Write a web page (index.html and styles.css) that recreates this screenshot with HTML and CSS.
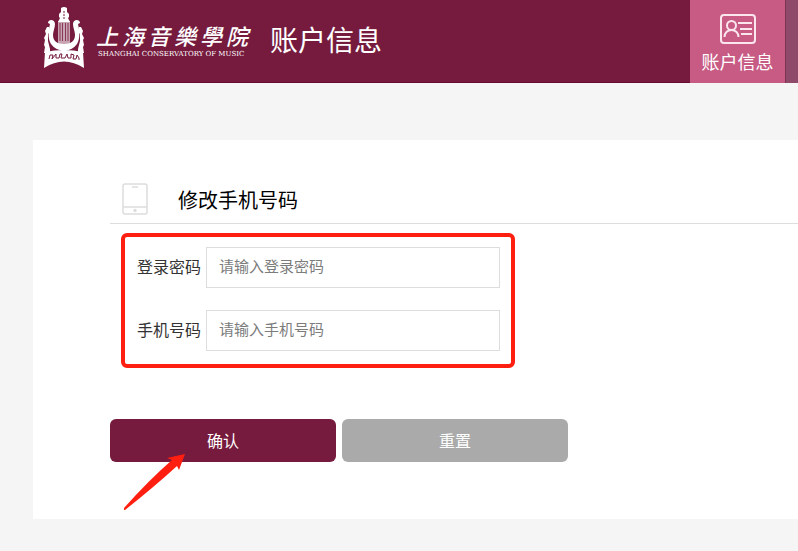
FILE: index.html
```html
<!DOCTYPE html>
<html lang="zh-CN">
<head>
  <meta charset="UTF-8" />
  <meta name="viewport" content="width=device-width, initial-scale=1.0" />
  <title>账户信息</title>
  <link rel="stylesheet" href="styles.css">
</head>
<body>
<header class="header">
  <div class="brand">
    <svg class="brand-mark" viewBox="0 0 40 62" aria-hidden="true">
      <!-- neck -->
      <path d="M17 1q3-2 6 0v4l2 2v3l-1 1 2 4H14l2-4-1-1V7l2-2z" fill="#fff" />
      <path d="M20 4v9" stroke="#761b3e" stroke-dasharray="2 1" fill="none" />
      <!-- lyre and strings -->
      <path d="M4 16c0-4 7-4 7 1 0 4-2 7-2 11 0 6 4 9 11 9s11-3 11-9c0-4-2-7-2-11 0-5 7-5 7-1l-2 1c2 8 2 15-1 20-3 4-7 6-12 7v2h-2v-2c-5-1-9-3-12-7-3-5-3-12-1-20z" fill="#fff" />
      <path d="M14 14h12v24H14z" fill="#fff" opacity=".6" />
      <path d="M16 16v18M18.500 16v18M21.500 16v18M24 16v18" stroke="#761b3e" stroke-width=".8" fill="none" />
      <!-- side frames -->
      <path d="M3 20h2v6l-1 1v7l1 4 1 4v4H0l1-6-1-2 1-5-1-2 2-4-1-3zM37 20h-2v6l1 1v7l-1 4-1 4v4h6l-1-6 1-2-1-5 1-2-2-4 1-3z" fill="#fff" />
      <!-- base -->
      <path d="M1 45q19-4 38 0l1 16q-20-13-40 0z" fill="#fff" />
      <path d="M5 52l1-4h3l-1 4 4-5v4h3l1-4h2l-1 4h4l2-4 1 4h3v-4l3 1-1 4h3l1-4 2 3v2" stroke="#761b3e" stroke-width="1" fill="none" />
    </svg>
    <div class="brand-text">
      <div class="brand-name">
        <span>上</span><span>海</span><span>音</span><span>樂</span><span>學</span><span>院</span>
      </div>
      <span class="brand-sub">SHANGHAI CONSERVATORY OF MUSIC</span>
    </div>
  </div>
  <h1 class="header-title">账户信息</h1>
  <nav class="nav">
    <a class="nav-item active" href="#">
      <svg class="nav-icon" viewBox="0 0 36 30" fill="none" stroke="#fbe6ee" stroke-width="2" aria-hidden="true">
        <rect x="1" y="1" width="34" height="28" rx="3" />
        <circle cx="11.500" cy="11.500" r="4.500" />
        <path d="M4.500 23c0-9.500 14-9.500 14 0M18 9h14M20 15h12M21 20h11" />
      </svg>
      <span>账户信息</span>
    </a>
    <div class="nav-more"></div>
  </nav>
</header>

<main class="card">
  <div class="card-head">
    <svg class="phone-icon" viewBox="0 0 26 32" fill="none" stroke="#ddd" stroke-width="1.500" aria-hidden="true">
      <rect x="1" y="1" width="24" height="30" rx="2" />
      <path d="M1 24h24M10 4h6" />
      <circle cx="13" cy="27.500" r="1" fill="#ddd" />
    </svg>
    <h2 class="card-title">修改手机号码</h2>
  </div>
  <form class="form">
    <div class="fields">
      <div class="field">
        <label for="password">登录密码</label>
        <input id="password" type="password" placeholder="请输入登录密码" />
      </div>
      <div class="field">
        <label for="phone">手机号码</label>
        <input id="phone" type="tel" placeholder="请输入手机号码" />
      </div>
    </div>
    <div class="actions">
      <button class="btn btn-primary" type="button">确认</button>
      <button class="btn btn-reset" type="reset">重置</button>
      <svg class="pointer" viewBox="0 0 62 58" aria-hidden="true">
        <path d="M61 1L43 5L48 7Q25 27 0 55V57H1Q30 34 53 13L55 17Z" fill="#ff1f10" />
      </svg>
    </div>
  </form>
</main>
</body>
</html>
```
FILE: styles.css
```css
* {
  box-sizing: border-box;
}
body {
  margin: 0;
  background: #f5f5f5;
  color: #333;
  font-family: "Noto Sans CJK SC", sans-serif;
  font-size: 16px;
}
.header {
  display: flex;
  align-items: center;
  height: 83px;
  padding-left: 44px;
  background: #761b3e;
  color: #fff;
  box-shadow: inset 0 -1px #6b0a30;
}
.brand {
  display: flex;
  align-items: center;
  gap: 12px;
  padding-bottom: 8px;
}
.brand-mark {
  width: 40px;
  height: 62px;
}
.brand-text {
  display: flex;
  flex-direction: column;
  width: 152px;
  padding-top: 4px;
  white-space: nowrap;
}
.brand-name {
  display: flex;
  justify-content: space-between;
  font-family: "Noto Sans CJK TC", sans-serif;
  font-size: 22px;
  font-style: italic;
  font-weight: 500;
  line-height: 28px;
}
.brand-sub {
  padding-left: 2px;
  font-family: "DejaVu Serif", serif;
  font-size: 7px;
  line-height: 10px;
}
.header-title {
  margin: 0 0 6px 22px;
  font-size: 28px;
  font-weight: 400;
}
.nav {
  display: flex;
  align-self: stretch;
  margin-left: auto;
}
.nav-item {
  display: flex;
  flex-direction: column;
  align-items: center;
  gap: 4px;
  width: 96px;
  padding-top: 14px;
  border-right: 1px solid #7b3453;
  color: #fff;
  font-size: 18px;
  line-height: 26px;
  text-decoration: none;
}
.nav-item.active {
  background: #c75b84;
}
.nav-icon {
  width: 36px;
  height: 30px;
}
.nav-more {
  width: 12px;
  background: #8f4a69;
}
.card {
  margin: 57px 0 32px 33px;
  padding: 36px 0 57px 77px;
  background: #fff;
}
.card-head {
  display: flex;
  align-items: center;
  gap: 30px;
  height: 48px;
  padding: 0 0 2px 12px;
  border-bottom: 1px solid #ddd;
}
.phone-icon {
  width: 26px;
  height: 32px;
}
.card-title {
  margin: 0;
  padding-top: 2px;
  color: #000;
  font-size: 20px;
  font-weight: 400;
}
.fields {
  display: flex;
  flex-direction: column;
  gap: 22px;
  max-width: 394px;
  margin: 9px 0 0 11px;
  padding: 10px 11px 13px 12px;
  border: 4px solid #ff1f10;
  border-radius: 6px;
}
.field {
  display: flex;
  align-items: center;
  gap: 5px;
}
.field label {
  padding-bottom: 4px;
}
.field input {
  flex: 1;
  min-width: 0;
  height: 41px;
  padding: 0 12px 4px;
  border: 1px solid #ddd;
  font-family: inherit;
  font-size: 15px;
}
.field input::placeholder {
  color: #7c7c7c;
}
.actions {
  position: relative;
  display: flex;
  gap: 6px;
  margin-top: 51px;
}
.btn {
  width: 226px;
  height: 43px;
  padding: 0 0 2px;
  border: none;
  border-radius: 6px;
  color: #fff;
  font-family: inherit;
  font-size: 16px;
  cursor: pointer;
}
.btn-primary {
  background: #761b3e;
}
.btn-reset {
  background: #aaa;
}
.pointer {
  position: absolute;
  top: 34px;
  left: 14px;
  width: 62px;
  height: 58px;
  pointer-events: none;
}
```
